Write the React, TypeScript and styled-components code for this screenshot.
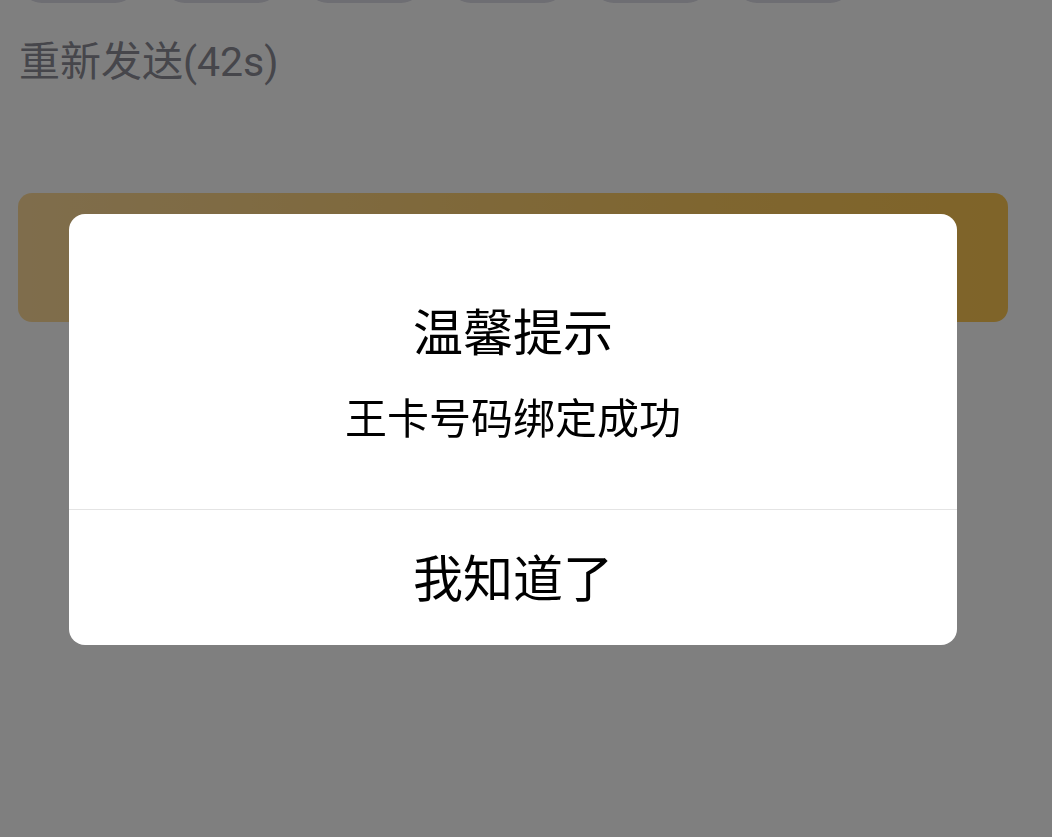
import React from 'react';
import styled, {createGlobalStyle} from 'styled-components';

const GlobalStyle = createGlobalStyle`
    html, body {
        margin: 0;
        padding: 0;
        background: #ffffff;
        font-family: "Noto Sans CJK SC", "Roboto", sans-serif;
    }
`;

const CODE_SLOTS = 6;

const App: React.FC = () => {
    return (
        <>
            <GlobalStyle />
            <Page>
                <CodeRow>
                    {Array.from({length: CODE_SLOTS}).map((_, i) => (
                        <CodeBox key={i} />
                    ))}
                </CodeRow>
                <Resend>重新发送(42s)</Resend>
                <SubmitButton />
            </Page>
            <Mask>
                <Dialog>
                    <DialogBody>
                        <DialogTitle>温馨提示</DialogTitle>
                        <DialogMessage>王卡号码绑定成功</DialogMessage>
                    </DialogBody>
                    <DialogAction>我知道了</DialogAction>
                </Dialog>
            </Mask>
        </>
    );
}

const Page = styled.div`
    height: 837px;
    padding: 0 44px 0 18px;
    box-sizing: border-box;
`;

const CodeRow = styled.div`
    display: flex;
    align-items: flex-end;
    gap: 26px;
    height: 3px;
    padding-left: 2px;
    overflow: hidden;
`;

const CodeBox = styled.div`
    flex: 0 0 117px;
    height: 80px;
    border-radius: 22px;
    background: #dcdce6;
`;

const Resend = styled.div`
    margin-top: 35px;
    padding-left: 1px;
    font-family: "Roboto", "Noto Sans CJK SC", sans-serif;
    font-size: 41px;
    line-height: 48px;
    color: #8c8c96;
`;

const SubmitButton = styled.div`
    margin-top: 107px;
    height: 129px;
    border-radius: 14px;
    background: linear-gradient(90deg, #fedb99 0%, #ffcc60 70%, #ffc852 100%);
`;

const Mask = styled.div`
    position: fixed;
    inset: 0;
    background: rgba(0, 0, 0, 0.5);
    padding: 214px 0 0 69px;
    box-sizing: border-box;
`;

const Dialog = styled.div`
    width: 888px;
    background: #ffffff;
    border-radius: 16px;
    overflow: hidden;
    text-align: center;
    color: #000000;
`;

const DialogBody = styled.div`
    padding: 85px 0 68px;
    border-bottom: 1px solid #e4e4e4;
`;

const DialogTitle = styled.div`
    font-size: 50px;
    line-height: 60px;
`;

const DialogMessage = styled.div`
    margin-top: 32px;
    font-size: 42px;
    line-height: 50px;
`;

const DialogAction = styled.div`
    height: 135px;
    padding-bottom: 6px;
    box-sizing: border-box;
    display: flex;
    align-items: center;
    justify-content: center;
    font-size: 50px;
`;

export default App;
